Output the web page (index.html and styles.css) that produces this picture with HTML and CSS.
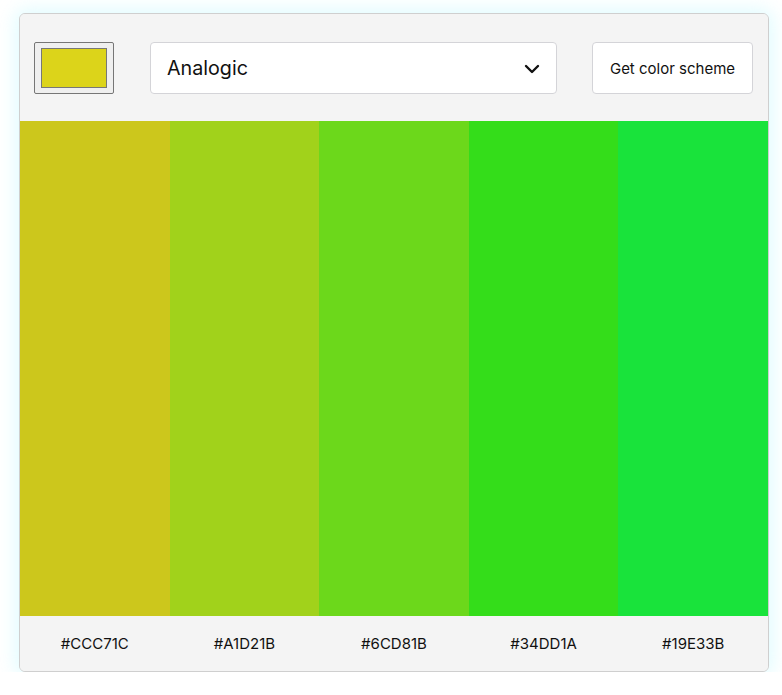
FILE: index.html
```html
<!DOCTYPE html>
<html lang="en">
<head>
<meta charset="utf-8">
<title>Color Scheme</title>
<link rel="stylesheet" href="styles.css">
</head>
<body>
<main class="card">
  <header class="controls">
    <div class="color-pick"><div class="color-swatch"></div></div>
    <div class="mode-select">
      <span class="mode-label">Analogic</span>
      <svg class="chevron" width="16" height="10" viewBox="0 0 16 10" aria-hidden="true"><path d="M2 2 L8 8 L14 2" fill="none" stroke="#111" stroke-width="2.4" stroke-linecap="round" stroke-linejoin="round"/></svg>
    </div>
    <button class="get-btn" type="button">Get color scheme</button>
  </header>
  <section class="stripes">
    <div class="stripe" style="background:#CCC71C"></div>
    <div class="stripe" style="background:#A1D21B"></div>
    <div class="stripe" style="background:#6CD81B"></div>
    <div class="stripe" style="background:#34DD1A"></div>
    <div class="stripe" style="background:#19E33B"></div>
  </section>
  <footer class="labels">
    <span>#CCC71C</span>
    <span>#A1D21B</span>
    <span>#6CD81B</span>
    <span>#34DD1A</span>
    <span>#19E33B</span>
  </footer>
</main>
</body>
</html>
```
FILE: styles.css
```css
* { box-sizing: border-box; }
html, body { margin: 0; background: #fff; }
body { padding: 13px 13px 0 19px; }
.card {
  width: 750px;
  border: 1px solid #cfcfcf;
  border-radius: 6px;
  overflow: hidden;
  background: #f4f4f4;
  box-shadow: 0 0 18px 4px rgba(200, 250, 255, 0.55);
}
.controls {
  display: flex;
  align-items: center;
  height: 107px;
  padding: 28px 15px 27px 14px;
  background: #f4f4f4;
}
.color-pick {
  width: 80px;
  height: 52px;
  border: 1px solid #767676;
  border-radius: 2px;
  background: #efefef;
  padding: 5px 6px;
}
.color-swatch {
  width: 100%;
  height: 100%;
  background: #DCD41A;
  border: 1px solid #777;
}
.mode-select {
  margin-left: 36px;
  width: 407px;
  height: 52px;
  background: #fff;
  border: 1px solid #d4d4d8;
  border-radius: 4px;
  display: flex;
  align-items: center;
  justify-content: space-between;
  padding: 0 16px 0 16px;
}
.mode-label {
  font-family: Inter, "Liberation Sans", sans-serif;
  font-size: 19.7px;
  color: #111;
}
.chevron { display: block; margin-top: 1px; }
.get-btn {
  margin-left: 35px;
  width: 161px;
  height: 52px;
  background: #fff;
  border: 1px solid #d4d4d8;
  border-radius: 4px;
  font-family: Inter, "Liberation Sans", sans-serif;
  font-size: 15px;
  color: #111;
  padding: 0;
}
.stripes {
  display: flex;
  height: 495px;
}
.stripe { flex: 1; }
.labels {
  display: flex;
  height: 55px;
  align-items: center;
  background: #f4f4f4;
}
.labels span {
  flex: 1;
  text-align: center;
  font-family: Inter, "Liberation Sans", sans-serif;
  font-size: 15px;
  color: #111;
}
```
